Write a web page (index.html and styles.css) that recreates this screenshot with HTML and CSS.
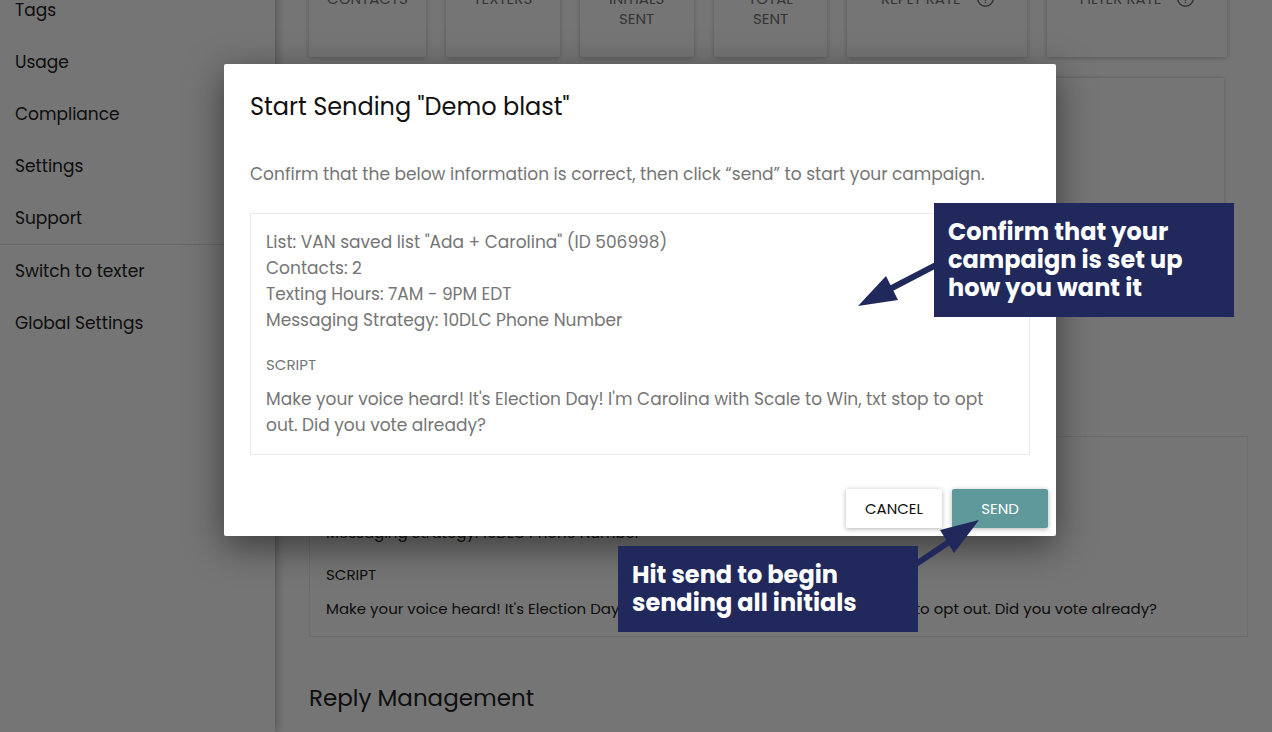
FILE: index.html
```html
<!DOCTYPE html>
<html lang="en">
<head>
	<meta charset="utf-8">
	<title>Start Sending</title>
	<link rel="stylesheet" href="styles.css">
</head>

<body>
	<div class="page">
		<nav class="sidebar">
			<a href="#">Tags</a>
			<a href="#">Usage</a>
			<a href="#">Compliance</a>
			<a href="#">Settings</a>
			<a href="#">Support</a>
			<hr>
			<a href="#">Switch to texter</a>
			<a href="#">Global Settings</a>
		</nav>

		<main class="content">
			<div class="stats">
				<div class="stat first">CONTACTS</div>
				<div class="stat">TEXTERS</div>
				<div class="stat">INITIALS<br>SENT</div>
				<div class="stat">TOTAL<br>SENT</div>
				<div class="stat wide">REPLY RATE
					<svg class="help" viewBox="0 0 24 24"><circle cx="12" cy="12" r="11"/><path d="M9 10a3 3 0 1 1 4.5 2.6c-1 .6-1.5 1.2-1.5 2.4M12 16.5v2"/></svg>
				</div>
				<div class="stat wide">FILTER RATE
					<svg class="help" viewBox="0 0 24 24"><circle cx="12" cy="12" r="11"/><path d="M9 10a3 3 0 1 1 4.5 2.6c-1 .6-1.5 1.2-1.5 2.4M12 16.5v2"/></svg>
				</div>
			</div>

			<div class="chart"></div>

			<section class="details">
				<p>Messaging Strategy: 10DLC Phone Number</p>
				<h4>SCRIPT</h4>
				<p>Make your voice heard! It's Election Day! I'm Carolina with Scale to Win, txt stop to opt out. Did you vote already?</p>
			</section>

			<h2>Reply Management</h2>
		</main>
	</div>

	<div class="overlay">
		<div class="modal" role="dialog" aria-labelledby="modal-title">
			<h3 id="modal-title">Start Sending "Demo blast"</h3>
			<p>Confirm that the below information is correct, then click “send” to start your campaign.</p>
			<div class="summary">
				<p>List: VAN saved list "Ada + Carolina" (ID 506998)</p>
				<p>Contacts: 2</p>
				<p>Texting Hours: 7AM - 9PM EDT</p>
				<p>Messaging Strategy: 10DLC Phone Number</p>
				<h4>SCRIPT</h4>
				<p>Make your voice heard! It's Election Day! I'm Carolina with Scale to Win, txt stop to opt out. Did you vote already?</p>
			</div>
			<div class="actions">
				<button type="button">CANCEL</button>
				<button type="button" class="primary">SEND</button>
			</div>

			<!-- callouts -->
			<div class="callout confirm">
				Confirm that your<br>campaign is set up<br>how you want it
				<svg class="arrow" viewBox="0 0 80 46"><path d="M78 2L30 27" stroke-width="6"/><polygon points="0,43 28,13 40,37"/></svg>
			</div>
			<div class="callout send">
				Hit send to begin<br>sending all initials
				<svg class="arrow" viewBox="0 0 66 48"><path d="M0 44L36 20" stroke-width="6"/><polygon points="63,0 24,10 38,33"/></svg>
			</div>
		</div>
	</div>
</body>

</html>
```
FILE: styles.css
```css
* {
	box-sizing: border-box;
}

body {
	margin: 0;
	height: 100vh;
	overflow: hidden;
	position: relative;
	font-family: Poppins, Inter, sans-serif;
	font-size: 17px;
	color: #212121;
}

h2,
h3,
h4,
p {
	margin: 0;
	font-weight: 400;
}

.page {
	display: flex;
	height: 100%;
}

.sidebar {
	width: 275px;
	flex-shrink: 0;
	margin-top: -16px;
	box-shadow: 0 0 10px rgba(0, 0, 0, 0.4);
}

.sidebar a {
	display: block;
	padding: 0 15px;
	line-height: 52px;
	color: #212121;
	text-decoration: none;
}

.sidebar hr {
	margin: 0;
	border: none;
	border-top: 1px solid #e0e0e0;
}

.content {
	flex: 1;
	padding: 0 24px 0 34px;
}

.stats {
	display: flex;
	gap: 20px;
	margin: -11px 21px 0 0;
}

.stat {
	flex: 114;
	height: 68px;
	font-size: 15px;
	line-height: 20px;
	text-align: center;
	color: #757575;
	border-radius: 2px;
	box-shadow: 0 1px 5px rgba(0, 0, 0, 0.25);
}

.stat.first {
	flex: 117;
}

.stat.wide {
	flex: 180;
}

.help {
	width: 17px;
	height: 17px;
	margin-left: 12px;
	vertical-align: -3px;
	fill: none;
	stroke: #757575;
	stroke-width: 2;
}

.chart {
	height: 236px;
	margin: 21px 24px 0 0;
	border-radius: 2px;
	box-shadow: 0 0 4px rgba(0, 0, 0, 0.22);
}

.details {
	margin-top: 122px;
	padding: 84px 16px 15px;
	border: 1px solid #ebebeb;
	font-size: 15px;
	line-height: 24px;
}

.details h4 {
	margin: 18px 0 10px;
	font-size: 15px;
}

.content h2 {
	margin-top: 43px;
	font-size: 23px;
	line-height: 36px;
}

.overlay {
	position: absolute;
	inset: 0 -8px 0 0;
	padding-top: 64px;
	background: rgba(0, 0, 0, 0.54);
}

.modal {
	position: relative;
	width: 65%;
	margin: 0 auto;
	padding: 24px 26px 8px;
	background: #fff;
	border-radius: 2px;
	box-shadow: 0 10px 36px rgba(0, 0, 0, 0.5);
	line-height: 26px;
	color: #757575;
}

.modal h3 {
	margin-bottom: 35px;
	font-size: 24px;
	line-height: 38px;
	color: #111;
}

.summary {
	margin-top: 26px;
	padding: 15px 15px 16px;
	border: 1px solid #ebebeb;
}

.summary h4 {
	margin: 20px 0 9px;
	font-size: 15px;
	line-height: 24px;
}

.actions {
	display: flex;
	justify-content: flex-end;
	gap: 10px;
	margin: 34px -18px 0 0;
}

.actions button {
	width: 96px;
	height: 39px;
	padding: 0;
	border: none;
	border-radius: 2px;
	background: #fff;
	box-shadow: 0 1px 5px rgba(0, 0, 0, 0.3);
	font-family: inherit;
	font-size: 15px;
	color: #111;
}

.actions .primary {
	background: #5f999c;
	color: #fff;
}

.callout {
	position: absolute;
	width: 300px;
	padding: 15px 14px;
	background: #20285c;
	color: #fff;
	font-size: 24px;
	font-weight: 700;
	line-height: 28px;
}

.callout.confirm {
	top: 139px;
	left: 710px;
}

.callout.send {
	top: 482px;
	left: 394px;
}

.arrow {
	position: absolute;
	fill: #20285c;
	stroke: #20285c;
	stroke-width: 0;
}

.confirm .arrow {
	top: 60px;
	left: -76px;
	width: 80px;
}

.send .arrow {
	top: -26px;
	left: 298px;
	width: 66px;
}
```
